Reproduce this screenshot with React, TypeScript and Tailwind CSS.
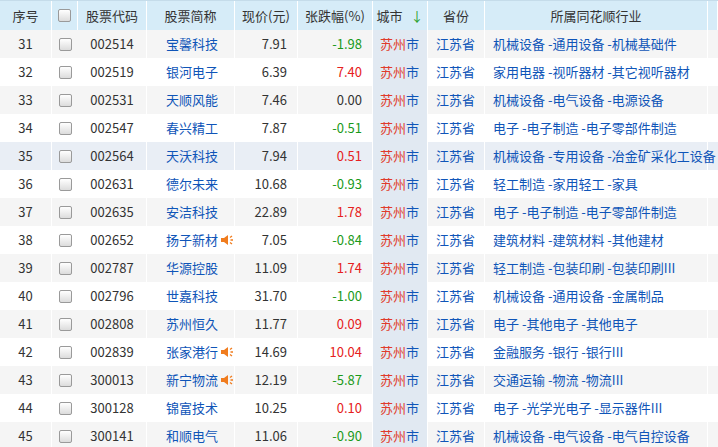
const rows: [number, string, string, string, string, string, boolean][] = [
  [31, '002514', '宝馨科技', '7.91', '-1.98', '机械设备 -通用设备 -机械基础件', false],
  [32, '002519', '银河电子', '6.39', '7.40', '家用电器 -视听器材 -其它视听器材', false],
  [33, '002531', '天顺风能', '7.46', '0.00', '机械设备 -电气设备 -电源设备', false],
  [34, '002547', '春兴精工', '7.87', '-0.51', '电子 -电子制造 -电子零部件制造', false],
  [35, '002564', '天沃科技', '7.94', '0.51', '机械设备 -专用设备 -冶金矿采化工设备', false],
  [36, '002631', '德尔未来', '10.68', '-0.93', '轻工制造 -家用轻工 -家具', false],
  [37, '002635', '安洁科技', '22.89', '1.78', '电子 -电子制造 -电子零部件制造', false],
  [38, '002652', '扬子新材', '7.05', '-0.84', '建筑材料 -建筑材料 -其他建材', true],
  [39, '002787', '华源控股', '11.09', '1.74', '轻工制造 -包装印刷 -包装印刷III', false],
  [40, '002796', '世嘉科技', '31.70', '-1.00', '机械设备 -通用设备 -金属制品', false],
  [41, '002808', '苏州恒久', '11.77', '0.09', '电子 -其他电子 -其他电子', false],
  [42, '002839', '张家港行', '14.69', '10.04', '金融服务 -银行 -银行III', true],
  [43, '300013', '新宁物流', '12.19', '-5.87', '交通运输 -物流 -物流III', true],
  [44, '300128', '锦富技术', '10.25', '0.10', '电子 -光学光电子 -显示器件III', false],
  [45, '300141', '和顺电气', '11.06', '-0.90', '机械设备 -电气设备 -电气自控设备', false],
];

const Speaker = () => (
  <svg width="14" height="14" viewBox="0 0 14 14" className="ml-0.5">
    <path d="M1 5h3l4-3v10L4 9H1z" fill="#f07c1e" />
    <path d="M10 4.5l2-1.5M10.5 7h2.5M10 9.5l2 1.5" stroke="#f07c1e" strokeWidth="1.3" />
  </svg>
);

const Box = () => <span className="inline-block w-[13px] h-[13px] rounded-[2px] border border-[#9a9a9a] bg-gradient-to-b from-white to-[#dcdcdc]" />;

const cols = 'grid grid-cols-[52px_26px_69px_88px_63px_75px_55px_57px_223px_10px]';

export default function App() {
  return (
    <div className="w-[718px] h-[447px] overflow-hidden bg-white text-[13px] text-[#333]" style={{ fontFamily: '"Microsoft YaHei", "Noto Sans CJK SC", sans-serif' }}>
      <div className={`${cols} h-[30px] bg-[#d6ecf8] border-t border-[#c5dcea] items-center`}>
        {['序号', '', '股票代码', '股票简称', '现价(元)', '张跌幅(%)', '城市', '省份', '所属同花顺行业', ''].map((h, i) => (
          <div key={i} className="h-full flex items-center justify-center border-r border-white">
            {i === 1 ? <Box /> : i === 6 ? (<><span>城市</span><span className="ml-2 text-[#2aa02a]">↓</span></>) : h}
          </div>
        ))}
      </div>
      {rows.map(([n, code, name, price, chg, ind, spk], i) => {
        const c = parseFloat(chg);
        const bg = n === 35 ? 'bg-[#e9eef5]' : i % 2 === 0 ? 'bg-[#f5f5f5]' : 'bg-white';
        return (
          <div key={n} className={`${cols} h-[28px] items-center ${bg}`}>
            <div className="h-full flex items-center justify-center border-r border-white">{n}</div>
            <div className="h-full flex items-center justify-center"><Box /></div>
            <div className="h-full flex items-center justify-center border-r border-white">{code}</div>
            <div className="h-full flex items-center pl-[19px] text-[#0f55b8] border-r border-white">{name}{spk && <Speaker />}</div>
            <div className="h-full flex items-center justify-end pr-[10px] border-r border-white">{price}</div>
            <div className={`h-full flex items-center justify-end pr-[10px] border-r border-white ${c > 0 ? 'text-[#e62020]' : c < 0 ? 'text-[#1a9a1a]' : ''}`}>{chg}</div>
            <div className="h-full flex items-center pl-[7px] bg-[#e1e9f2] border-r border-white"><span className="text-[#e03a2a]">苏州</span><span className="text-[#0f55b8]">市</span></div>
            <div className="h-full flex items-center pl-[8px] text-[#0f55b8] border-r border-white">江苏省</div>
            <div className="h-full flex items-center pl-[8px] text-[#0f55b8] whitespace-nowrap border-r border-white">{ind}</div>
            <div />
          </div>
        );
      })}
    </div>
  );
}
